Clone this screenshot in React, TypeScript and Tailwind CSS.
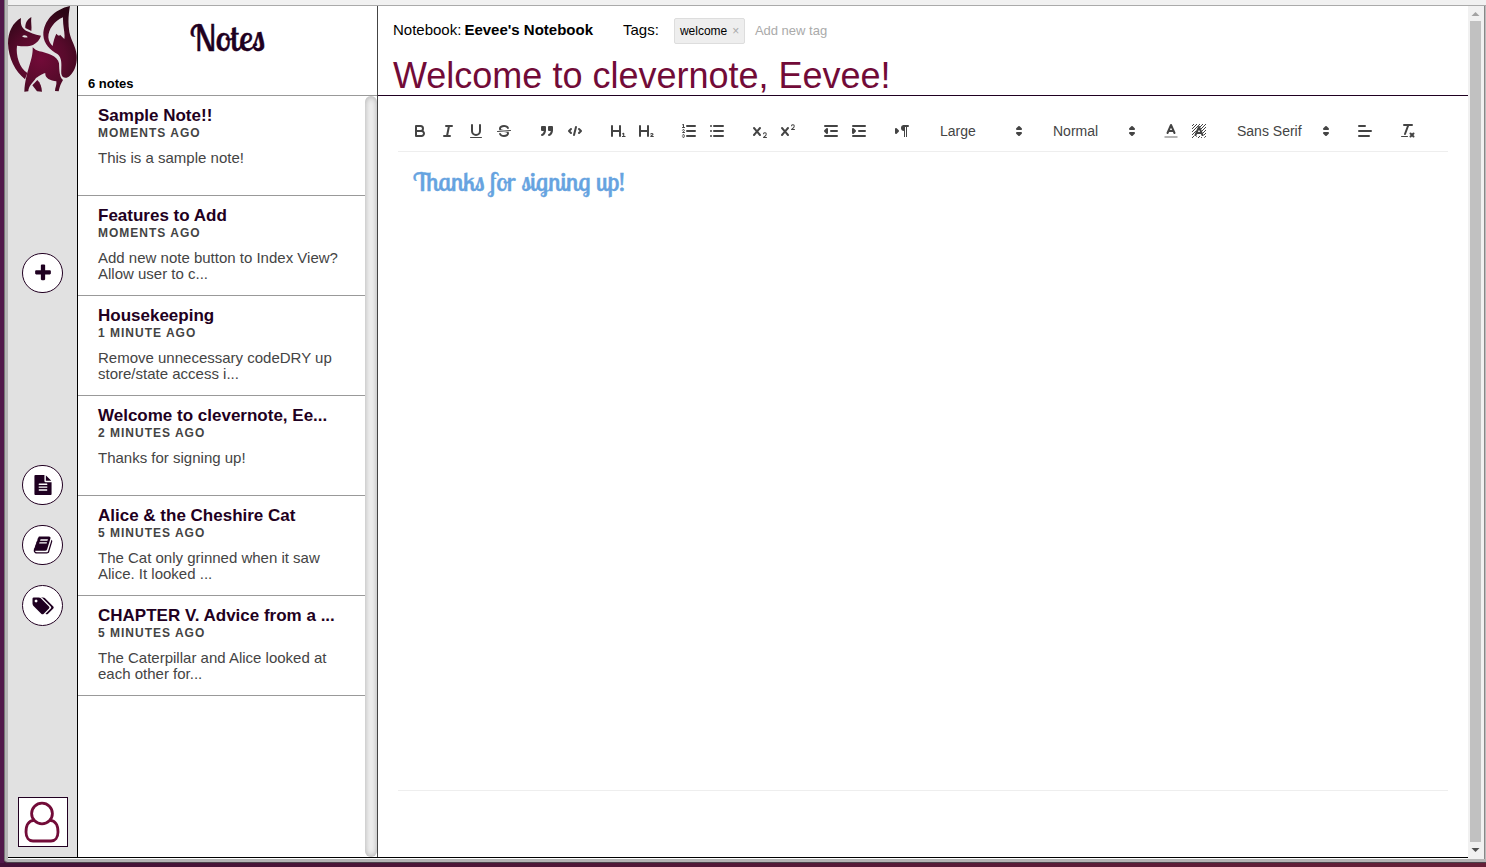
import type { ReactNode } from "react";

const notes = [
  { title: "Sample Note!!", time: "MOMENTS AGO", body: "This is a sample note!" },
  { title: "Features to Add", time: "MOMENTS AGO", body: "Add new note button to Index View?Allow user to c..." },
  { title: "Housekeeping", time: "1 MINUTE AGO", body: "Remove unnecessary codeDRY up store/state access i..." },
  { title: "Welcome to clevernote, Ee...", time: "2 MINUTES AGO", body: "Thanks for signing up!" },
  { title: "Alice & the Cheshire Cat", time: "5 MINUTES AGO", body: "The Cat only grinned when it saw Alice. It looked ..." },
  { title: "CHAPTER V. Advice from a ...", time: "5 MINUTES AGO", body: "The Caterpillar and Alice looked at each other for..." },
];

const PLUS =
  "M1600 736v192q0 40-28 68t-68 28h-416v416q0 40-28 68t-68 28h-192q-40 0-68-28t-28-68v-416h-416q-40 0-68-28t-28-68v-192q0-40 28-68t68-28h416v-416q0-40 28-68t68-28h192q40 0 68 28t28 68v416h416q40 0 68 28t28 68z";
const FILE =
  "M1596 476q14 14 28 36h-472v-472q22 14 36 28zm-476 164h544v1056q0 40-28 68t-68 28h-1344q-40 0-68-28t-28-68v-1600q0-40 28-68t68-28h800v544q0 40 28 68t68 28zm160 736v-64q0-14-9-23t-23-9h-704q-14 0-23 9t-9 23v64q0 14 9 23t23 9h704q14 0 23-9t9-23zm0-256v-64q0-14-9-23t-23-9h-704q-14 0-23 9t-9 23v64q0 14 9 23t23 9h704q14 0 23-9t9-23zm0-256v-64q0-14-9-23t-23-9h-704q-14 0-23 9t-9 23v64q0 14 9 23t23 9h704q14 0 23-9t9-23z";
const BOOK =
  "M1703 478q40 57 18 129l-275 906q-19 64-76.5 107.5t-122.5 43.5h-923q-77 0-148.5-53.5t-99.5-131.5q-24-67-2-127 0-4 3-27t4-37q1-8-3-21.5t-3-19.5q2-11 8-21t16.5-23.5 16.5-23.5q23-38 45-91.5t30-91.5q3-10 .5-30t-.5-28q3-11 17-28t17-23q21-36 42-92t25-90q1-9-2.5-32t.5-28q4-13 22-30.5t22-22.5q19-26 42.5-84.5t27.5-96.5q1-8-3-25.5t-2-26.5q2-8 9-18t18-23 17-21q8-12 16.5-30.5t15-35 16-36 19.5-32 26.5-23.5 36-11.5 47.5 5.5l-1 3q38-9 51-9h761q74 0 114 56t18 130l-274 906q-36 119-71.5 153.5t-128.5 34.5h-869q-27 0-38 15-11 16-1 43 24 70 144 70h923q29 0 56-15.5t35-41.5l300-987q7-22 5-57 38 15 59 43zm-1064 2q-4 13 2 22.5t20 9.5h608q13 0 25.5-9.5t16.5-22.5l21-64q4-13-2-22.5t-20-9.5h-608q-13 0-25.5 9.5t-16.5 22.5zm-83 256q-4 13 2 22.5t20 9.5h608q13 0 25.5-9.5t16.5-22.5l21-64q4-13-2-22.5t-20-9.5h-608q-13 0-25.5 9.5t-16.5 22.5z";
const TAGS =
  "M576 448q0-53-37.5-90.5t-90.5-37.5-90.5 37.5-37.5 90.5 37.5 90.5 90.5 37.5 90.5-37.5 37.5-90.5zm1067 576q0 53-37 90l-491 492q-39 37-91 37-53 0-90-37l-715-716q-38-37-64.5-101t-26.5-117v-416q0-52 38-90t90-38h416q53 0 117 26.5t102 64.5l715 714q37 39 37 91zm384 0q0 53-37 90l-491 492q-39 37-91 37-36 0-59-14t-53-45l470-470q37-37 37-90 0-52-37-91l-715-714q-38-38-102-64.5t-117-26.5h224q53 0 117 26.5t102 64.5l715 714q37 39 37 91z";

function Fox() {
  return (
    <svg className="block h-[86px] w-[69px]" viewBox="24 18 207 258">
      <defs>
        <radialGradient id="fur" gradientUnits="userSpaceOnUse" cx="122" cy="178" r="155">
          <stop offset="0" stopColor="#720b38" />
          <stop offset="0.5" stopColor="#570a2b" />
          <stop offset="1" stopColor="#2c0615" />
        </radialGradient>
      </defs>
      <g fill="url(#fur)">
        <path
          fillRule="evenodd"
          d="M210 18C164 28 130 62 130 105C131 133 152 150 172 162C190 176 182 202 184 222C187 236 201 236 209 228C225 213 232 190 230 165C227 138 213 122 208 96C203 66 206 40 210 18ZM189 52C163 63 145 88 145 112C146 124 151 132 158 138C160 124 164 112 169 101C174 106 178 110 180 104L193 117C196 97 188 80 189 52Z"
        />
        <path d="M94 51C82 58 75 70 76 84L94 93C96 79 92 67 94 51Z" />
        <path
          fillRule="evenodd"
          d="M63 54C39 67 24 95 24 130C25 175 46 215 75 238L82 219C58 203 47 166 51 137C68 139 88 140 99 135C110 129 120 119 123 107C103 104 90 97 78 92C64 84 61 71 63 54ZM66 109C72 103 81 106 83 112C77 114 70 112 66 109Z"
        />
        <path d="M98 142C100 181 77 211 73 275L85 274C86 257 99 248 108 234C120 226 132 218 136 220C134 234 152 243 169 244C171 254 165 264 165 273L176 274C179 259 183 250 189 240C178 232 178 211 177 190C174 168 139 158 118 154C109 151 104 148 98 142Z" />
        <path d="M112 240L97 256L111 274L126 275C125 261 121 248 112 240Z" />
      </g>
    </svg>
  );
}

function RoundButton({ d, wide = false }: { d: string; wide?: boolean }) {
  return (
    <button
      className={
        (wide ? "h-[41px]" : "h-10") +
        " flex w-[41px] shrink-0 items-center justify-center rounded-full border border-[#220022] bg-white"
      }
    >
      <svg
        className={wide ? "mr-px h-5 w-[23px]" : "h-5 w-5"}
        viewBox={wide ? "0 0 2048 1792" : "0 0 1792 1792"}
        fill="#1f0021"
      >
        <path d={d} />
      </svg>
    </button>
  );
}

function Tool({ children }: { children: ReactNode }) {
  return (
    <button className="h-6 w-7 px-[5px] py-[3px]">
      <svg
        viewBox="0 0 18 18"
        className="block h-[18px] w-[18px]"
        fill="none"
        stroke="#444"
        strokeWidth="2"
        strokeLinecap="round"
        strokeLinejoin="round"
      >
        {children}
      </svg>
    </button>
  );
}

function Picker({ label, wide = false }: { label: string; wide?: boolean }) {
  return (
    <div
      className={
        (wide ? "w-[108px]" : "w-[98px]") +
        " flex h-6 items-center justify-between pl-[9px] pr-px text-[14px] text-[#444]"
      }
    >
      <span className="leading-6">{label}</span>
      <svg viewBox="0 0 18 18" className="h-[18px] w-[18px]" fill="#444" stroke="#444" strokeWidth="2" strokeLinejoin="round">
        <polygon points="7 11 9 13 11 11 7 11" />
        <polygon points="7 7 9 5 11 7 7 7" />
      </svg>
    </div>
  );
}

const CROSS =
  "M9.65,5.241a1,1,0,0,0-1.409.108L6,7.964,3.759,5.349A1,1,0,0,0,2.192,6.59178Q2.21541,6.6213,2.241,6.649L4.684,9.5,2.241,12.35A1,1,0,0,0,3.71,13.70722q0.02557-.02768.049-0.05722L6,11.036,8.241,13.65a1,1,0,1,0,1.567-1.24277Q9.78459,12.3777,9.759,12.35L7.316,9.5,9.759,6.651A1,1,0,0,0,9.65,5.241Z";

function Toolbar() {
  return (
    <div className="flex h-[46px] gap-[15px] border-b border-[#eee] pl-2 pt-[13px]">
      <div className="flex">
        <Tool>
          <path d="M5,4H9.5A2.5,2.5,0,0,1,12,6.5v0A2.5,2.5,0,0,1,9.5,9H5V4Z" />
          <path d="M5,9h5.5A2.5,2.5,0,0,1,13,11.5v0A2.5,2.5,0,0,1,10.5,14H5V9Z" />
        </Tool>
        <Tool>
          <path d="M7 4H13M5 14H11M8 14L10 4" />
        </Tool>
        <Tool>
          <path d="M5,3V9a4.012,4.012,0,0,0,4,4H9a4.012,4.012,0,0,0,4-4V3" />
          <rect x="3" y="15" width="12" height="1" rx="0.5" fill="#444" stroke="none" />
        </Tool>
        <Tool>
          <path strokeWidth="1" d="M15.5 8.5L2.5 9.5" />
          <g fill="#444" stroke="none">
            <path d="M9.007,8C6.542,7.791,6,7.519,6,6.5,6,5.792,7.283,5,9,5c1.571,0,2.765.679,2.969,1.309a1,1,0,0,0,1.9-.617C13.356,4.106,11.354,3,9,3,6.2,3,4,4.538,4,6.5a3.2,3.2,0,0,0,.5,1.843Z" />
            <path d="M8.984,10C11.457,10.208,12,10.479,12,11.5c0,0.708-1.283,1.5-3,1.5-1.571,0-2.765-.679-2.969-1.309a1,1,0,1,0-1.9.617C4.644,13.894,6.646,15,9,15c2.8,0,5-1.538,5-3.5a3.2,3.2,0,0,0-.5-1.843Z" />
          </g>
        </Tool>
      </div>
      <div className="flex">
        <Tool>
          <g fill="#444">
            <rect x="4" y="5" width="3" height="3" />
            <rect x="11" y="5" width="3" height="3" />
            <path d="M7,8c0,4.031-3,5-3,5" />
            <path d="M14,8c0,4.031-3,5-3,5" />
          </g>
        </Tool>
        <Tool>
          <path d="M5 7L3 9L5 11M13 7L15 9L13 11M10 5L8 13" />
        </Tool>
      </div>
      <div className="flex">
        <Tool>
          <path d="M3 4V14M11 4V14M11 9H3" />
          <path strokeWidth="1.1" strokeLinecap="butt" d="M13 14.5H16.5M14.7 14.5V11.3L13.3 12" />
        </Tool>
        <Tool>
          <path d="M3 4V14M11 4V14M11 9H3" />
          <path strokeWidth="1.1" d="M16.3 14.5H13.8C13.8 13.8 16 13.2 16 12.3C16 11.2 14.1 11.2 13.8 12" />
        </Tool>
      </div>
      <div className="flex">
        <Tool>
          <path d="M7 4H15M7 9H15M7 14H15" />
          <path strokeWidth="1" d="M2.5 5.5H4.5" />
          <path
            fill="#444"
            stroke="none"
            d="M3.5,6A0.5,0.5,0,0,1,3,5.5V3.085l-0.276.138A0.5,0.5,0,0,1,2.053,3c-0.124-.247-0.023-0.324.224-0.447l1-.5A0.5,0.5,0,0,1,4,2.5v3A0.5,0.5,0,0,1,3.5,6Z"
          />
          <path strokeWidth="1" d="M4.5,10.5h-2c0-.234,1.85-1.076,1.85-2.234A0.959,0.959,0,0,0,2.5,8.156" />
          <path
            strokeWidth="1"
            d="M2.5,14.846a0.959,0.959,0,0,0,1.85-.109A0.7,0.7,0,0,0,3.75,14a0.688,0.688,0,0,0,.6-0.736,0.959,0.959,0,0,0-1.85-.109"
          />
        </Tool>
        <Tool>
          <path d="M6 4H15M6 9H15M6 14H15M3 4H3M3 9H3M3 14H3" />
        </Tool>
      </div>
      <div className="flex">
        <Tool>
          <g fill="#444" stroke="none">
            <path d="M15.5,15H13.861a3.858,3.858,0,0,0,1.914-2.975,1.8,1.8,0,0,0-1.6-1.751A1.921,1.921,0,0,0,12.021,11.7a0.50013,0.50013,0,1,0,.957.291h0a0.914,0.914,0,0,1,1.053-.725,0.81,0.81,0,0,1,.744.762c0,1.076-1.16971,1.86982-1.93971,2.43082A1.45639,1.45639,0,0,0,12,15.5a0.5,0.5,0,0,0,.5.5h3A0.5,0.5,0,0,0,15.5,15Z" />
            <path d={CROSS} />
          </g>
        </Tool>
        <Tool>
          <g fill="#444" stroke="none">
            <path d="M15.5,7H13.861a4.015,4.015,0,0,0,1.914-2.975,1.8,1.8,0,0,0-1.6-1.751A1.922,1.922,0,0,0,12.021,3.7a0.5,0.5,0,1,0,.957.291,0.917,0.917,0,0,1,1.053-.725,0.81,0.81,0,0,1,.744.762c0,1.077-1.164,1.925-1.934,2.486A1.423,1.423,0,0,0,12,7.5a0.5,0.5,0,0,0,.5.5h3A0.5,0.5,0,0,0,15.5,7Z" />
            <path d={CROSS} />
          </g>
        </Tool>
      </div>
      <div className="flex">
        <Tool>
          <path d="M3 14H15M3 4H15M9 9H15" />
          <path fill="#444" d="M5 7V11L3 9Z" />
        </Tool>
        <Tool>
          <path d="M3 14H15M3 4H15M9 9H15" />
          <path fill="#444" d="M3 7V11L5 9Z" />
        </Tool>
      </div>
      <Tool>
        <path fill="#444" d="M3 11L5 9L3 7Z" />
        <path d="M15 4H11" />
        <g fill="#444" stroke="none">
          <path d="M11,3a3,3,0,0,0,0,6h1V3H11Z" />
          <rect x="11" y="4" width="1" height="11" />
          <rect x="13" y="4" width="1" height="11" />
        </g>
      </Tool>
      <Picker label="Large" />
      <Picker label="Normal" />
      <div className="flex">
        <Tool>
          <path opacity="0.4" strokeLinecap="butt" d="M2.5 15H15.5" />
          <path d="M5.5 11L9 3L12.5 11M11.63 9H6.38" />
        </Tool>
        <Tool>
          <defs>
            <pattern id="hatch" width="3" height="3" patternUnits="userSpaceOnUse">
              <g fill="#444" stroke="none">
                <rect x="2" y="0" width="1" height="1" />
                <rect x="1" y="1" width="1" height="1" />
                <rect x="0" y="2" width="1" height="1" />
              </g>
            </pattern>
          </defs>
          <path
            d="M2 2H16V16H14.5L10.5 5.5L9 3.5L7.5 5.5L3.5 16H2ZM6.5 14H11.5L12 16H6Z"
            fill="url(#hatch)"
            stroke="none"
          />
          <path d="M5.5 13L9 5L12.5 13M11.63 11H6.38" />
        </Tool>
      </div>
      <Picker label="Sans Serif" wide />
      <Tool>
        <path d="M3 9H15M3 14H13M3 4H9" />
      </Tool>
      <Tool>
        <path d="M5 3H13M6 12L9.35 3M11.5 11.5L14.5 14.5M14.5 11.5L11.5 14.5" />
        <rect x="2" y="14" width="7" height="1" rx="0.5" fill="#444" stroke="none" />
      </Tool>
    </div>
  );
}

export default function App() {
  return (
    <div className="flex h-[867px] w-[1486px] flex-col overflow-hidden bg-[#431238] font-['Liberation_Sans',Arial,sans-serif] text-black">
      <div className="flex h-[863px]">
        <div className="w-1 shrink-0 bg-[#51184a]" />
        <div className="flex w-[1482px] flex-col rounded-bl-[4px] border-b border-l border-b-[#4b414a] border-l-[#777] bg-[#b5b5b5] pb-[3px] pl-[3px]">
          <div className="h-[6px] shrink-0 border-b border-[#aaa] bg-[#f1f1f1]" />
          <div className="flex h-[853px] bg-white">
            <div className="flex h-[852px] w-[1460px] border-b border-black">
              <nav className="flex w-[70px] shrink-0 flex-col border-r border-black bg-[#e1e1e1]">
                <Fox />
                <div className="flex flex-1 flex-col items-center pt-[161px]">
                  <RoundButton d={PLUS} />
                  <div className="mt-[172px] flex flex-col gap-5">
                    <RoundButton d={FILE} />
                    <RoundButton d={BOOK} />
                    <RoundButton d={TAGS} wide />
                  </div>
                </div>
                <button className="mb-[10px] ml-[10px] flex h-[50px] w-[50px] items-center justify-center border border-[#220022] bg-white">
                  <svg viewBox="0 0 36 42" className="mr-[2px] h-[42px] w-9" fill="none" stroke="#720b38" strokeWidth="2.8">
                    <circle cx="18" cy="12.5" r="10.4" />
                    <path d="M10 19.3C4 19.8 2 25.5 2 31C2 36.5 5 40 9 40H27C31 40 34 36.5 34 31C34 25.5 32 19.8 26 19.3" />
                  </svg>
                </button>
              </nav>

              <section className="flex w-[300px] shrink-0 flex-col border-r border-[#444]">
                <header className="flex h-[90px] shrink-0 flex-col justify-between border-b border-[#999]">
                  <h1 className="h-16 text-center font-['Lobster_Two',Lobster,'Liberation_Serif',serif] text-[36px] leading-[64px] text-[#1f0021] [-webkit-text-stroke:0.4px_#1f0021]">
                    Notes
                  </h1>
                  <p className="pb-[3px] pl-[10px] text-[13px] font-bold leading-4">6 notes</p>
                </header>
                <div className="flex flex-1">
                  <ul className="w-[287px]">
                    {notes.map((n) => (
                      <li key={n.title} className="h-[100px] border-b border-[#999] pl-5 pt-[10px]">
                        <h2 className="whitespace-nowrap text-[17px] font-bold leading-5 text-[#1f0021]">{n.title}</h2>
                        <p className="text-[12px] font-bold leading-[14px] tracking-[1px] text-[#444]">{n.time}</p>
                        <p className="mt-[10px] w-[247px] text-[15px] leading-4 text-[#444]">{n.body}</p>
                      </li>
                    ))}
                  </ul>
                  <div className="w-3 rounded-full bg-[#f0f0f0] shadow-[inset_0_0_6px_rgba(0,0,0,0.3)]" />
                </div>
              </section>

              <main className="flex min-w-0 flex-1 flex-col">
                <header className="h-[90px] shrink-0 border-b border-[#1f0021] pl-[15px] pt-3">
                  <div className="flex h-[26px] items-center text-[15px]">
                    <span className="pb-0.5">Notebook:</span>
                    <b className="ml-[3px] pb-0.5">Eevee's Notebook</b>
                    <span className="ml-[30px] pb-0.5">Tags:</span>
                    <span className="ml-[15px] flex h-[26px] w-[71px] items-center rounded-[2px] border border-[#ddd] bg-[#eee] pl-[5px] text-[12px]">
                      welcome<span className="ml-[5px] text-[12px] text-[#aaa]">×</span>
                    </span>
                    <span className="ml-[10px] text-[13px] text-[#aaa]">Add new tag</span>
                  </div>
                  <h1 className="mt-3 whitespace-nowrap text-[36px] leading-[40px] text-[#720b38]">
                    Welcome to clevernote, Eevee!
                  </h1>
                </header>
                <div className="ml-5 mr-5 mt-[10px] flex h-[685px] flex-col border-b border-[#eee]">
                  <Toolbar />
                  <div className="px-[15px] pt-3">
                    <p className="whitespace-nowrap font-['Lobster_Two',Lobster,'Liberation_Serif',serif] text-[26px] leading-[35px] text-[#66a3e0] [-webkit-text-stroke:0.4px_#66a3e0]">
                      Thanks for signing up!
                    </p>
                  </div>
                </div>
              </main>
            </div>
            <div className="flex w-[15px] flex-col items-center bg-[#f1f1f1]">
              <svg className="h-[15px] w-[15px]" viewBox="0 0 15 15" fill="#a3a3a3">
                <path d="M7.5 6L11.5 10H3.5Z" />
              </svg>
              <div className="w-[11px] flex-1 bg-[#c1c1c1]" />
              <svg className="h-[17px] w-[15px]" viewBox="0 0 15 17" fill="#505050">
                <path d="M3.5 6H11.5L7.5 10Z" />
              </svg>
            </div>
            <div className="w-px bg-[#f1f1f1]" />
            <div className="w-px bg-[#888]" />
            <div className="w-px bg-[#bbb]" />
          </div>
        </div>
      </div>
      <div className="h-1 bg-gradient-to-r from-[#431238] to-[#662038]" />
    </div>
  );
}
